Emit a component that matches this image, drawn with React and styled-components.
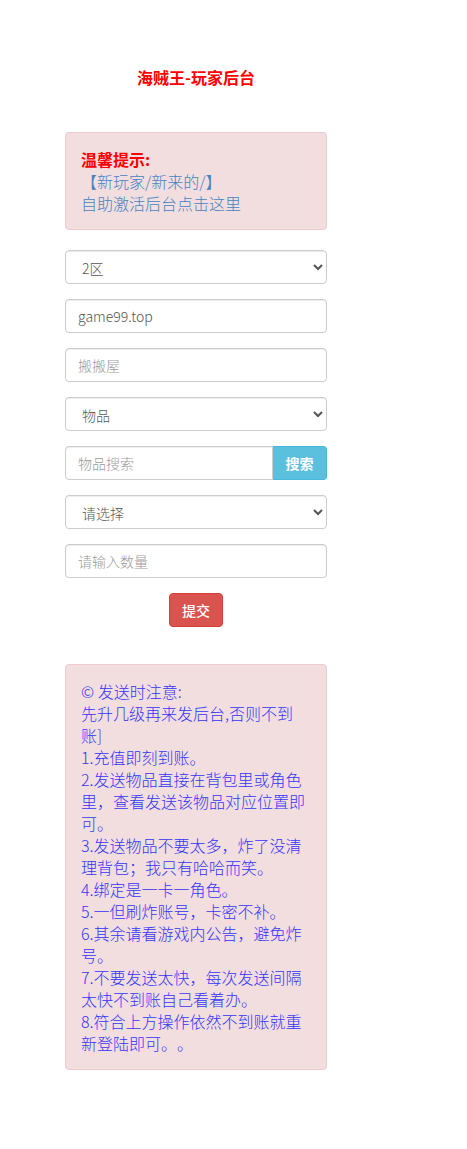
import styled, { createGlobalStyle } from "styled-components";

const GlobalStyle = createGlobalStyle`
  html, body {
    margin: 0;
    padding: 0;
    background: #fff;
  }
  body {
    font-family: "Microsoft YaHei", "Noto Sans CJK SC", sans-serif;
    font-size: 14px;
    line-height: 1.42857;
    color: #333;
    text-spacing-trim: space-all;
  }
  * {
    box-sizing: border-box;
  }
`;

const Page = styled.div`
  width: 262px;
  margin-left: 65px;
  padding: 66px 0 80px;
`;

const Title = styled.h3`
  margin: 0 0 44px;
  font-size: 16px;
  line-height: 22px;
  font-weight: bold;
  color: #ff0000;
  text-align: center;
`;

const Alert = styled.div`
  padding: 15px;
  margin-bottom: ${(p) => p.$mb || 0}px;
  background: #f2dede;
  border: 1px solid #ebccd1;
  border-radius: 4px;
  font-size: 16px;
  line-height: 22px;
  font-weight: 300;
  color: ${(p) => p.$color || "#a94442"};
`;

const Strong = styled.strong`
  display: block;
  font-weight: bold;
  color: #ff0000;
`;

const Link = styled.a`
  display: block;
  color: #4683c4;
  text-decoration: none;
`;

const Form = styled.form`
  display: flex;
  flex-direction: column;
  gap: 15px;
  margin-bottom: 37px;
`;

const controlBase = `
  display: block;
  width: 100%;
  height: 34px;
  padding: 6px 12px;
  font-family: "Microsoft YaHei", "Noto Sans CJK SC", sans-serif;
  font-size: 14px;
  font-weight: 300;
  line-height: 20px;
  color: #555;
  background: #fff;
  border: 1px solid #ccc;
  border-radius: 4px;
  box-shadow: inset 0 1px 1px rgba(0, 0, 0, 0.075);
  outline: none;
  &::placeholder {
    color: #999;
  }
`;

const Input = styled.input`
  ${controlBase}
  ${(p) => p.$joined && "border-top-right-radius: 0; border-bottom-right-radius: 0;"}
`;

const Select = styled.select`
  ${controlBase}
`;

const InputGroup = styled.div`
  display: flex;
`;

const SearchButton = styled.button`
  flex: 0 0 54px;
  height: 34px;
  padding: 6px 12px;
  font-family: inherit;
  font-size: 14px;
  font-weight: bold;
  color: #fff;
  background: #5bc0de;
  border: 1px solid #46b8da;
  border-left: none;
  border-radius: 0 4px 4px 0;
`;

const SubmitRow = styled.div`
  display: flex;
  justify-content: center;
`;

const SubmitButton = styled.button`
  height: 34px;
  padding: 6px 12px;
  font-family: inherit;
  font-size: 14px;
  font-weight: 500;
  color: #fff;
  background: #d9534f;
  border: 1px solid #d43f3a;
  border-radius: 4px;
`;

const Line = styled.div``;

const notes = [
  "© 发送时注意:",
  "先升几级再来发后台,否则不到账]",
  "1.充值即刻到账。",
  "2.发送物品直接在背包里或角色里，查看发送该物品对应位置即可。",
  "3.发送物品不要太多，炸了没清理背包；我只有哈哈而笑。",
  "4.绑定是一卡一角色。",
  "5.一但刷炸账号，卡密不补。",
  "6.其余请看游戏内公告，避免炸号。",
  "7.不要发送太快，每次发送间隔太快不到账自己看着办。",
  "8.符合上方操作依然不到账就重新登陆即可。。",
];

export default function App() {
  return (
    <>
      <GlobalStyle />
      <Page>
        <Title>海贼王-玩家后台</Title>
        <Alert $mb={20}>
          <Strong>温馨提示:</Strong>
          <Link href="#">【新玩家/新来的/】</Link>
          <Link href="#">自助激活后台点击这里</Link>
        </Alert>
        <Form onSubmit={(e) => e.preventDefault()}>
          <Select defaultValue="2">
            <option value="2">2区</option>
          </Select>
          <Input defaultValue="game99.top" />
          <Input placeholder="搬搬屋" />
          <Select defaultValue="">
            <option value="">物品</option>
          </Select>
          <InputGroup>
            <Input $joined placeholder="物品搜索" />
            <SearchButton type="button">搜索</SearchButton>
          </InputGroup>
          <Select defaultValue="">
            <option value="">请选择</option>
          </Select>
          <Input placeholder="请输入数量" />
          <SubmitRow>
            <SubmitButton type="submit">提交</SubmitButton>
          </SubmitRow>
        </Form>
        <Alert $color="#3535f8">
          {notes.map((n) => (
            <Line key={n}>{n}</Line>
          ))}
        </Alert>
      </Page>
    </>
  );
}
